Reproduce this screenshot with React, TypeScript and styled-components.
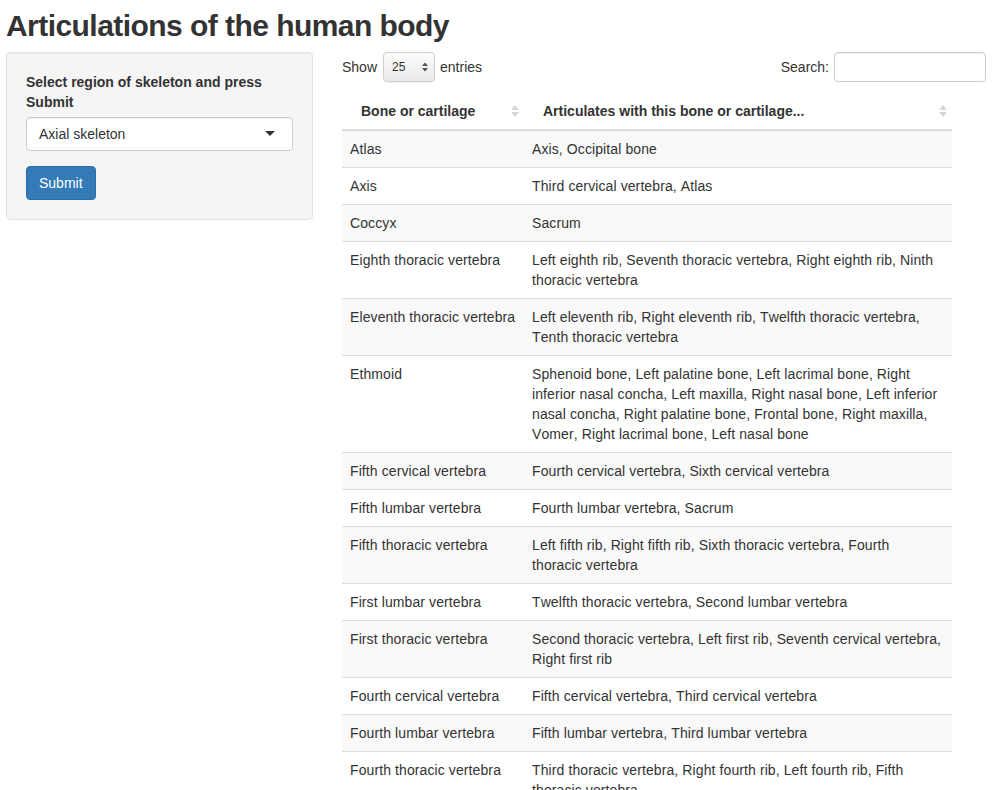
import React from "react";
import styled, { createGlobalStyle } from "styled-components";

const GlobalStyle = createGlobalStyle`
  html, body {
    margin: 0;
    padding: 0;
    background: #fff;
  }
  body {
    font-family: "Liberation Sans", Arial, Helvetica, sans-serif;
    font-size: 14px;
    line-height: 20px;
    color: #333;
  }
  * {
    box-sizing: border-box;
  }
`;

const Page = styled.div`
  padding: 0 13px 0 6px;
`;

const Title = styled.h2`
  margin: 9px 0 10px;
  font-size: 30px;
  line-height: 33px;
  font-weight: bold;
  letter-spacing: -0.55px;
  color: #333;
`;

const Columns = styled.div`
  display: grid;
  grid-template-columns: 307px 1fr;
  column-gap: 29px;
  align-items: start;
`;

const Well = styled.div`
  background: #f5f5f5;
  border: 1px solid #e3e3e3;
  border-radius: 4px;
  box-shadow: inset 0 1px 1px rgba(0, 0, 0, 0.05);
  padding: 19px;
`;

const FieldLabel = styled.label`
  display: block;
  font-weight: bold;
  margin-bottom: 5px;
`;

const FormGroup = styled.div`
  margin-bottom: 15px;
`;

const SelectBox = styled.div`
  position: relative;
  height: 34px;
  padding: 6px 12px;
  background: #fff;
  border: 1px solid #ccc;
  border-radius: 4px;
  box-shadow: inset 0 1px 1px rgba(0, 0, 0, 0.075);
  &::after {
    content: "";
    position: absolute;
    right: 17px;
    top: 50%;
    margin-top: -3px;
    border-style: solid;
    border-width: 5px 5px 0;
    border-color: #333 transparent transparent;
  }
`;

const Button = styled.button`
  font-family: inherit;
  font-size: 14px;
  line-height: 20px;
  padding: 6px 12px;
  color: #fff;
  background: #337ab7;
  border: 1px solid #2e6da4;
  border-radius: 4px;
  cursor: pointer;
`;

const Main = styled.div``;

const Controls = styled.div`
  display: flex;
  justify-content: space-between;
  align-items: center;
  height: 30px;
`;

const InlineLabel = styled.label`
  display: flex;
  align-items: center;
  gap: 5px;
`;

const LengthSelect = styled.div`
  display: flex;
  align-items: center;
  justify-content: space-between;
  width: 52px;
  height: 30px;
  margin-left: 1px;
  padding: 0 6px 0 8px;
  font-size: 12px;
  color: #333;
  background: linear-gradient(#fdfdfd, #e9e9e9);
  border: 1px solid #cfcfcf;
  border-radius: 4px;
  box-shadow: 0 1px 1px rgba(0, 0, 0, 0.08);
`;

const SearchInput = styled.input`
  width: 152px;
  height: 30px;
  border: 1px solid #ccc;
  border-radius: 4px;
  box-shadow: inset 0 1px 1px rgba(0, 0, 0, 0.075);
  padding: 5px 10px;
  font-family: inherit;
  font-size: 12px;
  outline: none;
`;

const Table = styled.table`
  width: 610px;
  margin-top: 11px;
  border-collapse: collapse;
  table-layout: fixed;
`;

const Th = styled.th<{ $w?: number }>`
  width: ${(p) => (p.$w ? `${p.$w}px` : "auto")};
  padding: 8px 5px 8px 19px;
  text-align: left;
  font-weight: bold;
  border-bottom: 2px solid #ddd;
  vertical-align: bottom;
`;

const HeadInner = styled.div`
  display: flex;
  align-items: center;
  justify-content: space-between;
`;

const Row = styled.tr<{ $striped: boolean }>`
  background: ${(p) => (p.$striped ? "#f9f9f9" : "#fff")};
`;

const Td = styled.td<{ $nowrap?: boolean }>`
  padding: 8px 10px 8px 8px;
  border-top: 1px solid #ddd;
  vertical-align: top;
  letter-spacing: 0.1px;
  font-kerning: none;
  white-space: ${(p) => (p.$nowrap ? "nowrap" : "normal")};
`;

const SortIcon = () => (
  <svg width="8" height="12" viewBox="0 0 8 12">
    <polygon points="0,5 4,0 8,5" fill="#d6d6d6" />
    <polygon points="0,7 8,7 4,12" fill="#d6d6d6" />
  </svg>
);

const Spinner = () => (
  <svg width="6" height="10" viewBox="0 0 6 10">
    <polygon points="0,4 3,0.5 6,4" fill="#555" />
    <polygon points="0,6 6,6 3,9.5" fill="#555" />
  </svg>
);

const rows: [string, string][] = [
  ["Atlas", "Axis, Occipital bone"],
  ["Axis", "Third cervical vertebra, Atlas"],
  ["Coccyx", "Sacrum"],
  ["Eighth thoracic vertebra", "Left eighth rib, Seventh thoracic vertebra, Right eighth rib, Ninth thoracic vertebra"],
  ["Eleventh thoracic vertebra", "Left eleventh rib, Right eleventh rib, Twelfth thoracic vertebra, Tenth thoracic vertebra"],
  [
    "Ethmoid",
    "Sphenoid bone, Left palatine bone, Left lacrimal bone, Right inferior nasal concha, Left maxilla, Right nasal bone, Left inferior nasal concha, Right palatine bone, Frontal bone, Right maxilla, Vomer, Right lacrimal bone, Left nasal bone",
  ],
  ["Fifth cervical vertebra", "Fourth cervical vertebra, Sixth cervical vertebra"],
  ["Fifth lumbar vertebra", "Fourth lumbar vertebra, Sacrum"],
  ["Fifth thoracic vertebra", "Left fifth rib, Right fifth rib, Sixth thoracic vertebra, Fourth thoracic vertebra"],
  ["First lumbar vertebra", "Twelfth thoracic vertebra, Second lumbar vertebra"],
  ["First thoracic vertebra", "Second thoracic vertebra, Left first rib, Seventh cervical vertebra, Right first rib"],
  ["Fourth cervical vertebra", "Fifth cervical vertebra, Third cervical vertebra"],
  ["Fourth lumbar vertebra", "Fifth lumbar vertebra, Third lumbar vertebra"],
  ["Fourth thoracic vertebra", "Third thoracic vertebra, Right fourth rib, Left fourth rib, Fifth thoracic vertebra"],
  [
    "Frontal bone",
    "Left parietal bone, Right parietal bone, Sphenoid bone, Ethmoid, Left nasal bone, Right nasal bone, Left maxilla, Right maxilla, Left lacrimal bone, Right lacrimal bone, Left zygomatic bone, Right zygomatic bone",
  ],
  ["Hyoid", "Thyroid cartilage"],
];

export default function App() {
  return (
    <>
      <GlobalStyle />
      <Page>
        <Title>Articulations of the human body</Title>
        <Columns>
          <Well>
            <FormGroup>
              <FieldLabel>Select region of skeleton and press Submit</FieldLabel>
              <SelectBox>Axial skeleton</SelectBox>
            </FormGroup>
            <Button>Submit</Button>
          </Well>
          <Main>
            <Controls>
              <InlineLabel>
                Show
                <LengthSelect>
                  25
                  <Spinner />
                </LengthSelect>
                entries
              </InlineLabel>
              <InlineLabel>
                Search:
                <SearchInput type="search" />
              </InlineLabel>
            </Controls>
            <Table>
              <thead>
                <tr>
                  <Th $w={182}>
                    <HeadInner>
                      Bone or cartilage
                      <SortIcon />
                    </HeadInner>
                  </Th>
                  <Th>
                    <HeadInner>
                      Articulates with this bone or cartilage...
                      <SortIcon />
                    </HeadInner>
                  </Th>
                </tr>
              </thead>
              <tbody>
                {rows.map(([bone, with_], i) => (
                  <Row key={bone} $striped={i % 2 === 0}>
                    <Td $nowrap>{bone}</Td>
                    <Td>{with_}</Td>
                  </Row>
                ))}
              </tbody>
            </Table>
          </Main>
        </Columns>
      </Page>
    </>
  );
}
